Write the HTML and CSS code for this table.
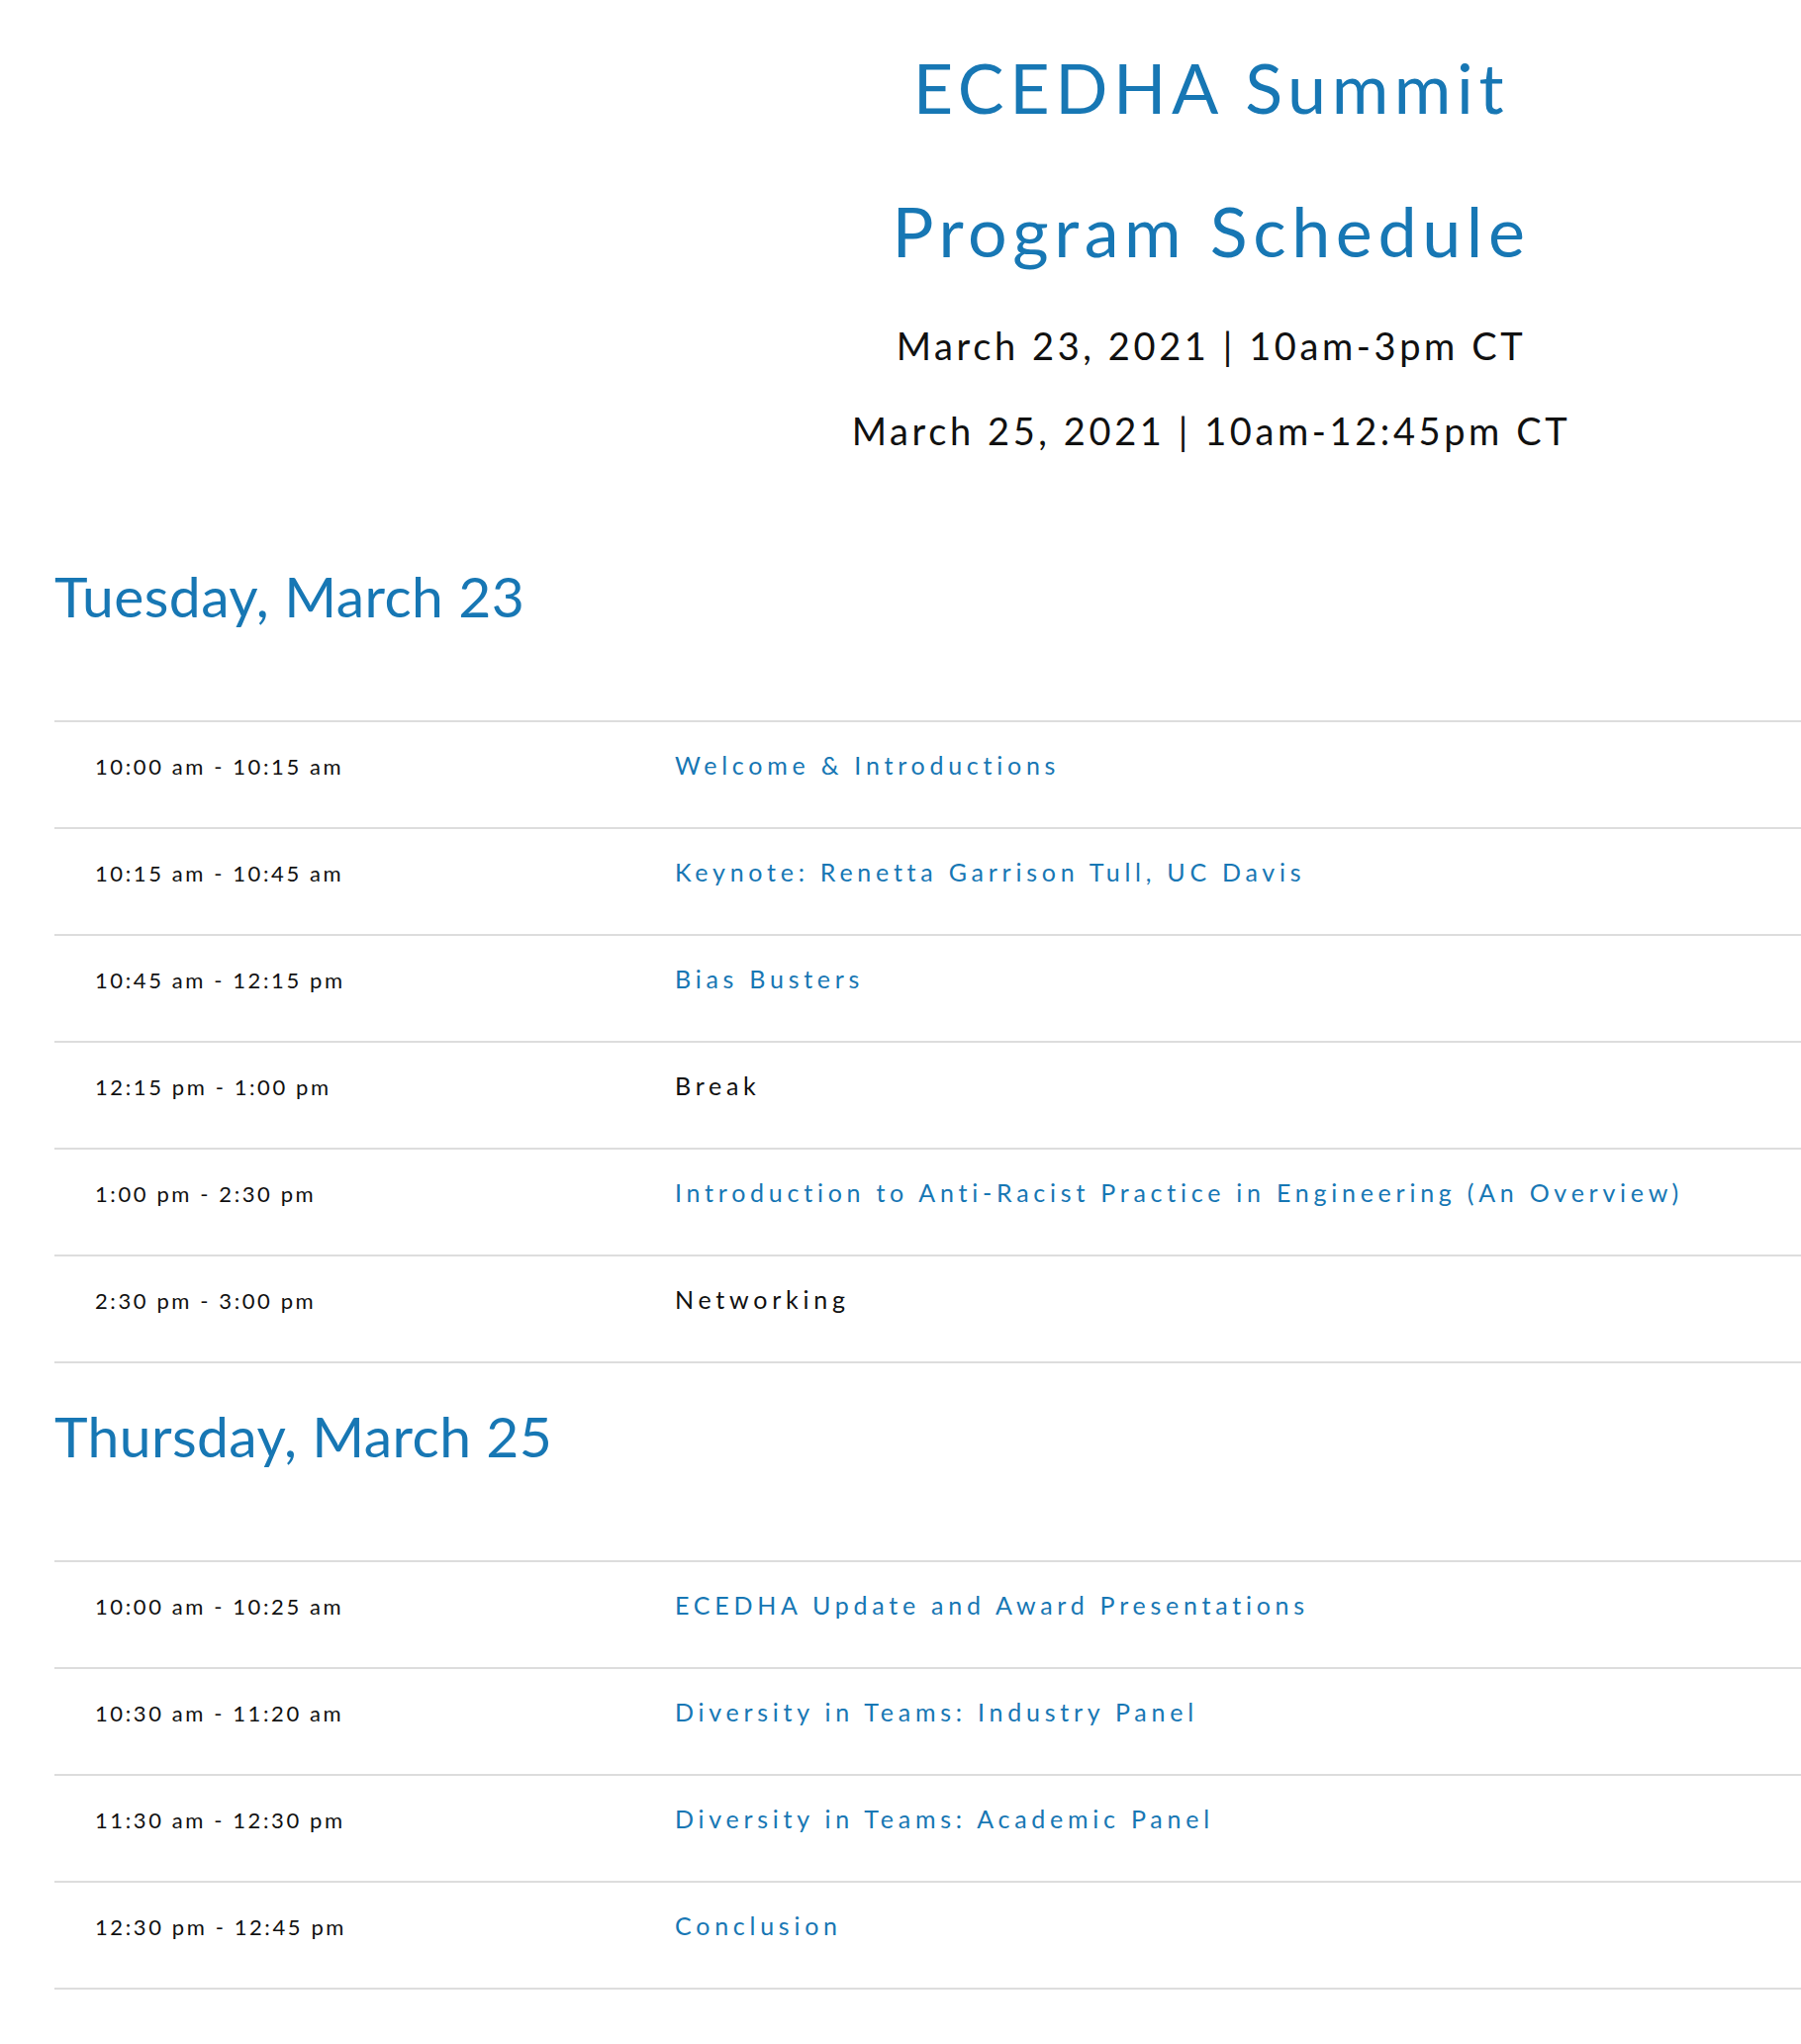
FILE: index.html
```html
<!DOCTYPE html>
<html lang="en">

<head>
    <meta charset="UTF-8">
    <meta name="viewport" content="width=device-width, initial-scale=1.0">
    <title>ECEDHA Summit - Program Schedule</title>
    <link rel="stylesheet" href="styles.css">
</head>

<body>
    <header class="intro">
        <div class="intro-side"></div>
        <div class="intro-text">
            <h1 class="title">ECEDHA Summit</h1>
            <h1 class="title title-second">Program Schedule</h1>
            <p class="dates">March 23, 2021 | 10am-3pm CT</p>
            <p class="dates dates-second">March 25, 2021 | 10am-12:45pm CT</p>
        </div>
    </header>

    <main class="schedule">
        <!-- Hari pertama -->
        <h2 class="day day-first">Tuesday, March 23</h2>
        <div class="sessions">
            <div class="session">
                <span class="time">10:00 am - 10:15 am</span>
                <a href="#" class="topic">Welcome &amp; Introductions</a>
            </div>
            <div class="session">
                <span class="time">10:15 am - 10:45 am</span>
                <a href="#" class="topic">Keynote: Renetta Garrison Tull, UC Davis</a>
            </div>
            <div class="session">
                <span class="time">10:45 am - 12:15 pm</span>
                <a href="#" class="topic">Bias Busters</a>
            </div>
            <div class="session">
                <span class="time">12:15 pm - 1:00 pm</span>
                <span class="topic plain">Break</span>
            </div>
            <div class="session">
                <span class="time">1:00 pm - 2:30 pm</span>
                <a href="#" class="topic">Introduction to Anti-Racist Practice in Engineering (An Overview)</a>
            </div>
            <div class="session">
                <span class="time">2:30 pm - 3:00 pm</span>
                <span class="topic plain">Networking</span>
            </div>
        </div>

        <!-- Hari kedua -->
        <h2 class="day">Thursday, March 25</h2>
        <div class="sessions">
            <div class="session">
                <span class="time">10:00 am - 10:25 am</span>
                <a href="#" class="topic">ECEDHA Update and Award Presentations</a>
            </div>
            <div class="session">
                <span class="time">10:30 am - 11:20 am</span>
                <a href="#" class="topic">Diversity in Teams: Industry Panel</a>
            </div>
            <div class="session">
                <span class="time">11:30 am - 12:30 pm</span>
                <a href="#" class="topic">Diversity in Teams: Academic Panel</a>
            </div>
            <div class="session">
                <span class="time">12:30 pm - 12:45 pm</span>
                <a href="#" class="topic">Conclusion</a>
            </div>
        </div>
    </main>
</body>

</html>
```

FILE: styles.css
```css
/* Dasar */
body {
    margin: 0;
    font-family: Lato, "Open Sans", Arial, sans-serif;
    background: #fff;
    color: #111;
}

.intro {
    display: grid;
    grid-template-columns: 628px 1fr;
    padding-top: 46px;
}

.intro-text {
    text-align: center;
}

.title {
    margin: 0;
    font-size: 70px;
    line-height: 84px;
    font-weight: 400;
    letter-spacing: 5.6px;
    color: #1777b4;
}

.title-second {
    margin-top: 61px;
}

.dates {
    margin: 51px 0 0;
    font-size: 38px;
    line-height: 46px;
    letter-spacing: 3.6px;
    color: #111;
}

.dates-second {
    margin-top: 40px;
}

.schedule {
    padding-left: 55px;
}

.day {
    margin: 40px 0 93px;
    font-size: 57px;
    line-height: 66px;
    font-weight: 400;
    letter-spacing: 0.4px;
    color: #1777b4;
}

.day-first {
    margin-top: 111px;
}

.sessions {
    border-bottom: 2px solid #ddd;
}

.session {
    display: grid;
    grid-template-columns: 586px 1fr;
    align-items: baseline;
    height: 108px;
    box-sizing: border-box;
    padding: 27px 0 0 41px;
    border-top: 2px solid #ddd;
}

.time {
    font-size: 22px;
    line-height: 32px;
    letter-spacing: 2.6px;
}

.topic {
    font-size: 25px;
    line-height: 32px;
    letter-spacing: 4.75px;
    color: #1777b4;
    text-decoration: none;
}

.topic.plain {
    color: #111;
}
```
